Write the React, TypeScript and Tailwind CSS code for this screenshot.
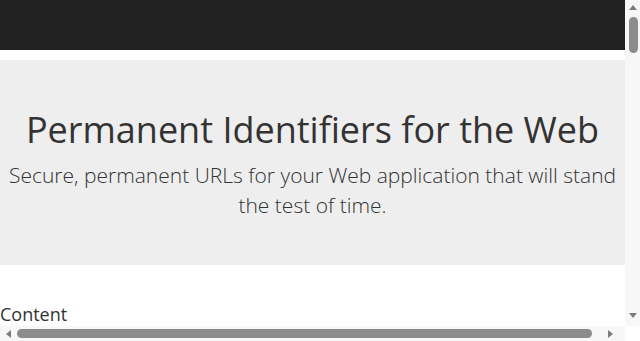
import React from 'react';

const Arrow: React.FC<{ dir: 'up' | 'down' | 'left' | 'right' }> = ({ dir }) => {
    const points = {
        up: '0,6 4,1 8,6',
        down: '0,1 4,6 8,1',
        left: '6,0 1,4 6,8',
        right: '1,0 6,4 1,8',
    }[dir];
    const vertical = dir === 'up' || dir === 'down';
    return (
        <svg width={vertical ? 8 : 7} height={vertical ? 7 : 8} viewBox={vertical ? '0 0 8 7' : '0 0 7 8'}>
            <polygon points={points} fill="#7b7b7b" />
        </svg>
    );
};

export default function App() {
    return (
        <div className="h-[341px] w-[640px] overflow-hidden flex flex-col bg-white text-[#333]" style={{ fontFamily: '"Open Sans", "Liberation Sans", sans-serif' }}>
            <div className="flex h-[326px]">
                <div className="w-[625px] overflow-hidden">
                    <div className="h-[50px] bg-[#222] mb-[10px]" />
                    <div className="bg-[#eee] pt-[30px] pb-[30px] mb-[30px] text-center">
                        <h1 className="mt-[20px] mb-[10px] text-[36px] leading-[1.1] font-normal text-[#333]">
                            Permanent Identifiers for the Web
                        </h1>
                        <p className="mb-[15px] text-[21px] leading-[30px] font-light text-[#333]">
                            Secure, permanent URLs for your Web application that will stand the test of time.
                        </p>
                    </div>
                    <h3 className="pt-[9px] text-[18px] leading-[20px] font-normal">Content</h3>
                </div>
                <div className="w-[15px] bg-[#f7f7f7] flex flex-col items-center">
                    <div className="h-[17px] flex items-center justify-center pb-[2px]">
                        <Arrow dir="up" />
                    </div>
                    <div className="w-[9px] h-[36px] rounded-full bg-[#8c8c8c] ml-[1px]" />
                    <div className="flex-1" />
                    <div className="h-[17px] flex items-center justify-center pb-[4px]">
                        <Arrow dir="down" />
                    </div>
                </div>
            </div>
            <div className="flex h-[15px]">
                <div className="w-[625px] bg-[#f7f7f7] flex items-center">
                    <div className="w-[17px] flex justify-center">
                        <Arrow dir="left" />
                    </div>
                    <div className="w-[575px] h-[9px] rounded-full bg-[#8c8c8c]" />
                    <div className="flex-1 flex justify-center pl-[4px]">
                        <Arrow dir="right" />
                    </div>
                </div>
                <div className="w-[15px] bg-white" />
            </div>
        </div>
    );
}
